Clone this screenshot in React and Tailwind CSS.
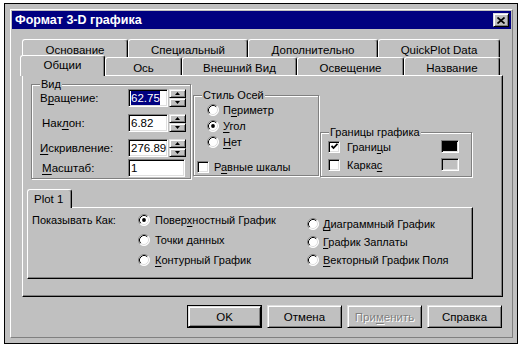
const F = "font-['Liberation_Sans',Arial,sans-serif]"

const raised =
  'border border-t-[#dfdfdf] border-l-[#dfdfdf] border-b-black border-r-black shadow-[inset_1px_1px_0_#fff,inset_-1px_-1px_0_#808080] bg-[#c0c0c0]'
const sunken =
  'border border-t-[#808080] border-l-[#808080] border-b-white border-r-white shadow-[inset_1px_1px_0_#000,inset_-1px_-1px_0_#dfdfdf]'

function Mn({ t, i }) {
  if (i === undefined) return <span>{t}</span>
  return (
    <span>
      {t.slice(0, i)}
      <span className="underline underline-offset-[2px]">{t[i]}</span>
      {t.slice(i + 1)}
    </span>
  )
}

function Tab({ label, w, selected }) {
  return (
    <div
      style={{ width: w }}
      className={`flex items-center justify-center border border-b-0 border-l-white border-t-white border-r-black rounded-t-[3px] shadow-[inset_-1px_0_0_#808080] bg-[#c0c0c0] ${
        selected ? 'relative z-10 -mb-px h-[21px] pb-[2px]' : 'h-[18px] pt-[2px]'
      }`}
    >
      {label}
    </div>
  )
}

function Group({ label, className, children }) {
  return (
    <div
      className={`relative shrink-0 border border-[#808080] shadow-[1px_1px_0_#fff,inset_1px_1px_0_#fff] ${className}`}
    >
      <span className="absolute -top-[8px] left-[8px] px-px bg-[#c0c0c0] leading-[14px]">{label}</span>
      {children}
    </div>
  )
}

function Arrow({ up }) {
  return (
    <svg width="5" height="3" viewBox="0 0 5 3">
      <path d={up ? 'M2.5 0L5 3H0z' : 'M0 0h5L2.5 3z'} fill="#000" />
    </svg>
  )
}

function Spin() {
  return (
    <div className="ml-px flex flex-col w-[17px] h-[18px]">
      <div className={`h-[9px] flex items-center justify-center ${raised}`}>
        <Arrow up />
      </div>
      <div className={`h-[9px] flex items-center justify-center ${raised}`}>
        <Arrow />
      </div>
    </div>
  )
}

function Field({ w, children }) {
  return (
    <div style={{ width: w }} className={`h-[18px] bg-white flex items-center pl-[2px] text-[11.5px] ${sunken}`}>
      {children}
    </div>
  )
}

function Radio({ checked }) {
  return (
    <svg width="12" height="12" viewBox="0 0 12 12" className="shrink-0">
      <circle cx="6" cy="6" r="5.5" fill="#fff" />
      <path d="M2.11 9.89A5.5 5.5 0 0 1 9.89 2.11" stroke="#808080" fill="none" />
      <path d="M9.89 2.11A5.5 5.5 0 0 1 2.11 9.89" stroke="#fff" fill="none" />
      <path d="M2.82 9.18A4.5 4.5 0 0 1 9.18 2.82" stroke="#000" fill="none" />
      <path d="M9.18 2.82A4.5 4.5 0 0 1 2.82 9.18" stroke="#dfdfdf" fill="none" />
      {checked && <circle cx="6" cy="6" r="1.9" fill="#000" />}
    </svg>
  )
}

function Check({ checked }) {
  return (
    <div className={`w-[12px] h-[12px] shrink-0 bg-white flex items-center justify-center ${sunken}`}>
      {checked && (
        <svg width="7" height="7" viewBox="0 0 7 7">
          <path d="M0.5 3l2 2 4-4.2" stroke="#000" strokeWidth="1.8" fill="none" />
        </svg>
      )}
    </div>
  )
}

function Btn({ children, def, disabled }) {
  return (
    <div className={`w-[75px] h-[23px] ${def ? 'border border-black' : ''}`}>
      <div
        className={`h-full flex items-center justify-center ${raised} ${
          disabled ? 'text-[#808080] [text-shadow:1px_1px_0_#fff]' : ''
        }`}
      >
        {children}
      </div>
    </div>
  )
}

const row1 = [
  ['Основание', 106],
  ['Специальный', 120],
  ['Дополнительно', 130],
  ['QuickPlot Data', 122],
]
const row2 = [
  ['Ось', 77],
  ['Внешний Вид', 115],
  ['Освещение', 107],
  ['Название', 96],
]

export default function App() {
  return (
    <div className={`w-[522px] h-[347px] bg-white pl-[4px] pt-[3px] text-[11px] leading-[14px] text-black ${F}`}>
      <div className="w-[514px] h-[341px] border border-black bg-[#c0c0c0] pl-[5px] pt-[5px] pr-[4px] pb-[5px]">
        <div className="h-full border border-t-white border-l-white border-r-[#808080] border-b-[#808080] p-px">
          {/* title bar */}
          <div className="h-[18px] bg-[#000080] flex items-center justify-between pl-[3px] pr-[2px]">
            <span className="text-white font-bold text-[12.5px]">Формат 3-D графика</span>
            <div className={`w-[16px] h-[14px] flex items-center justify-center ${raised}`}>
              <svg width="8" height="7" viewBox="0 0 8 7">
                <path d="M0.5 0.5l7 6M7.5 0.5l-7 6" stroke="#000" strokeWidth="1.7" />
              </svg>
            </div>
          </div>

          {/* tabs */}
          <div className="mt-[10px] ml-[10px] flex h-[18px] text-[11.5px]">
            {row1.map(([l, w]) => (
              <Tab key={l} label={l} w={w} />
            ))}
          </div>
          <div className="ml-[8px] flex items-end h-[18px] text-[11.5px]">
            <Tab label="Общии" w={85} selected />
            {row2.map(([l, w]) => (
              <Tab key={l} label={l} w={w} />
            ))}
          </div>

          {/* tab panel */}
          <div className="ml-[10px] w-[481px] h-[222px] border border-l-white border-t-white border-r-black border-b-black shadow-[inset_-1px_-1px_0_#808080]">
            <div className="flex items-start">
              <Group label="Вид" className="ml-[8px] mt-[8px] w-[160px] h-[95px]">
                <div className="pl-[8px] pt-[4px] flex flex-col text-[11.5px]">
                  <div className="flex items-center h-[18px]">
                    <span className="w-[88px]">
                      <Mn t="Вращение:" i={1} />
                    </span>
                    <Field w={40}>
                      <span className="bg-[#000080] text-white">62.75</span>
                    </Field>
                    <Spin />
                  </div>
                  <div className="flex items-center h-[18px] mt-[7px]">
                    <span className="w-[88px] pl-[2px]">
                      <Mn t="Наклон:" i={3} />
                    </span>
                    <Field w={40}>6.82</Field>
                    <Spin />
                  </div>
                  <div className="flex items-center h-[18px] mt-[7px]">
                    <span className="w-[88px]">
                      <Mn t="Искривление:" i={0} />
                    </span>
                    <Field w={40}>276.89</Field>
                    <Spin />
                  </div>
                  <div className="flex items-center h-[18px] mt-[2px]">
                    <span className="w-[88px] pl-[2px]">
                      <Mn t="Масштаб:" i={0} />
                    </span>
                    <Field w={57}>1</Field>
                  </div>
                </div>
              </Group>

              <Group label="Стиль Осей" className="ml-[2px] mt-[19px] w-[126px] h-[81px]">
                <div className="pt-[6px] flex flex-col">
                  {[
                    ['Периметр', 1, false],
                    ['Угол', 0, true],
                    ['Нет', 0, false],
                  ].map(([t, i, c]) => (
                    <div key={t} className="ml-[13px] h-[16px] flex items-center gap-[4px]">
                      <Radio checked={c} />
                      <Mn t={t} i={i} />
                    </div>
                  ))}
                  <div className="ml-[3px] mt-[9px] h-[16px] flex items-center gap-[5px]">
                    <Check />
                    <Mn t="Равные шкалы" i={1} />
                  </div>
                </div>
              </Group>

              <Group label="Границы графика" className="ml-px mt-[56px] w-[152px] h-[45px]">
                <div className="pt-[7px] pl-[7px] pr-[12px] flex flex-col gap-[5px]">
                  <div className="h-[13px] flex items-center">
                    <Check checked />
                    <span className="ml-[7px] flex-1">
                      <Mn t="Границы" i={5} />
                    </span>
                    <div className={`w-[18px] h-[13px] bg-black ${sunken}`} />
                  </div>
                  <div className="h-[13px] flex items-center">
                    <Check />
                    <span className="ml-[7px] flex-1">
                      <Mn t="Каркас" i={5} />
                    </span>
                    <div className={`w-[18px] h-[13px] bg-[#c0c0c0] ${sunken}`} />
                  </div>
                </div>
              </Group>
            </div>

            {/* Plot 1 */}
            <div className="mt-[10px] ml-[4px] flex items-end h-[18px]">
              <div className="relative z-10 -mb-px w-[45px] h-[19px] flex items-center pl-[6px] border border-b-0 border-l-white border-t-white border-r-black rounded-t-[3px] shadow-[inset_-1px_0_0_#808080] bg-[#c0c0c0] text-[11.5px]">
                Plot 1
              </div>
            </div>
            <div className="ml-[4px] w-[446px] h-[72px] border border-l-white border-t-white border-r-black border-b-black shadow-[inset_-1px_-1px_0_#808080] flex">
              <div className="w-[110px] pl-[4px] pt-[2px]">
                <div className="h-[20px] flex items-center">Показывать Как:</div>
              </div>
              <div className="w-[169px] pt-[2px] flex flex-col">
                {[
                  ['Поверхностный График', 5, true],
                  ['Точки данных', undefined, false],
                  ['Контурный График', 0, false],
                ].map(([t, i, c]) => (
                  <div key={t} className="h-[20px] flex items-center gap-[5px]">
                    <Radio checked={c} />
                    <Mn t={t} i={i} />
                  </div>
                ))}
              </div>
              <div className="pt-[7px] flex flex-col">
                {[
                  ['Диаграммный График', 0],
                  ['График Заплаты', 0],
                  ['Векторный График Поля', 0],
                ].map(([t, i]) => (
                  <div key={t} className="h-[18px] flex items-center gap-[4px]">
                    <Radio />
                    <Mn t={t} i={i} />
                  </div>
                ))}
              </div>
            </div>
          </div>

          {/* buttons */}
          <div className="mt-[8px] flex justify-end gap-[5px] pr-[9px] text-[11.5px]">
            <Btn def>OK</Btn>
            <Btn>Отмена</Btn>
            <Btn disabled>
              <Mn t="Применить" i={3} />
            </Btn>
            <Btn>Справка</Btn>
          </div>
        </div>
      </div>
    </div>
  )
}
